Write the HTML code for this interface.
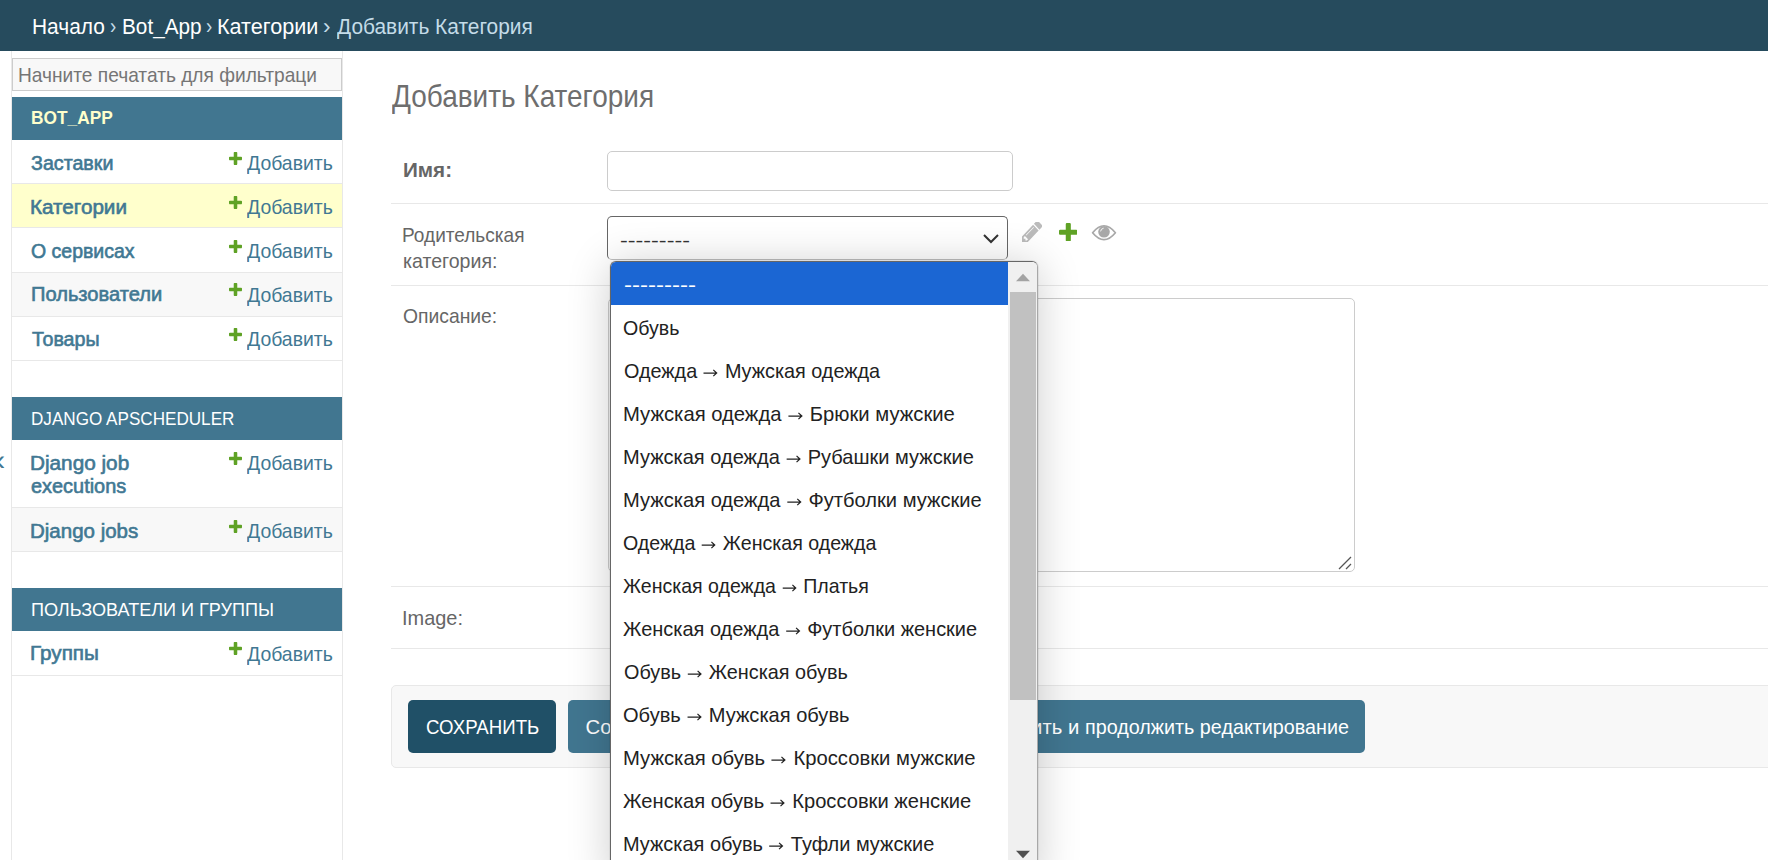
<!DOCTYPE html>
<html><head><meta charset="utf-8"><style>
html,body{margin:0;padding:0;width:1768px;height:860px;overflow:hidden;background:#fff;}
body{position:relative;font-family:"Liberation Sans",sans-serif;}
.t{position:absolute;white-space:nowrap;transform-origin:0 0;}
.r{position:absolute;}
.ar{display:inline-block;width:15px;height:8px;position:relative;top:-1px;margin:0 1px}
.ar svg{position:absolute;left:0;top:0;overflow:visible}

</style></head><body>
<div class="r" style="left:0px;top:0px;width:1768px;height:51px;background:#264b5d"></div>
<div id="t1" class="t" style="left:31.71px;top:11.67px;font-size:22px;line-height:29px;color:#fff;transform:scaleX(0.9495);">Начало</div>
<div id="t2" class="t" style="left:109.58px;top:11.67px;font-size:22px;line-height:29px;color:#c4dce8;transform:scaleX(0.8533);">›</div>
<div id="t3" class="t" style="left:121.70px;top:11.67px;font-size:22px;line-height:29px;color:#fff;transform:scaleX(0.9436);">Bot_App</div>
<div id="t4" class="t" style="left:205.58px;top:11.67px;font-size:22px;line-height:29px;color:#c4dce8;transform:scaleX(0.8533);">›</div>
<div id="t5" class="t" style="left:217.36px;top:11.67px;font-size:22px;line-height:29px;color:#fff;transform:scaleX(0.9811);">Категории</div>
<div id="t6" class="t" style="left:323.36px;top:11.67px;font-size:22px;line-height:29px;color:#c4dce8;transform:scaleX(1.0243);">›</div>
<div id="t7" class="t" style="left:336.71px;top:11.67px;font-size:22px;line-height:29px;color:#c4dce8;transform:scaleX(0.9495);">Добавить Категория</div>
<div class="r" style="left:11px;top:51px;width:1px;height:809px;background:#e8e8e8"></div>
<div class="r" style="left:342px;top:51px;width:1px;height:809px;background:#e8e8e8"></div>
<div class="r" style="left:12px;top:58px;width:330px;height:33px;background:#f8f8f8;border:1px solid #ccc;box-sizing:border-box"></div>
<div id="t8" class="t" style="left:17.96px;top:61.90px;font-size:20.2px;line-height:26px;color:#757575;transform:scaleX(0.9481);">Начните печатать для фильтраци</div>
<div id="t9" class="t" style="left:-11.50px;top:440.10px;font-size:30px;line-height:39px;color:#417893;">«</div>
<div class="r" style="left:12px;top:97px;width:330px;height:43px;background:#417690"></div>
<div id="t10" class="t" style="left:31.16px;top:106.19px;font-size:18.2px;line-height:24px;color:#ffc;font-weight:bold;transform:scaleX(0.9516);">BOT_APP</div>
<div class="r" style="left:12px;top:183px;width:330px;height:1px;background:#e8e8e8"></div>
<div id="t11" class="t" style="left:31.07px;top:150.70px;font-size:19.6px;line-height:25px;color:#417893;font-weight:normal;-webkit-text-stroke:0.6px #417893;transform:scaleX(1.0036);">Заставки</div>
<svg class="r" style="left:228.6px;top:151.7px" width="13" height="13" viewBox="192 192 1408 1408"><path fill="#5fa225" d="M1600 796v192q0 40-28 68t-68 28h-416v416q0 40-28 68t-68 28h-192q-40 0-68-28t-28-68v-416h-416q-40 0-68-28t-28-68v-192q0-40 28-68t68-28h416v-416q0-40 28-68t68-28h192q40 0 68 28t28 68v416h416q40 0 68 28t28 68z"/></svg>
<div id="t12" class="t" style="left:246.65px;top:149.96px;font-size:20.3px;line-height:26px;color:#417893;transform:scaleX(0.9581);">Добавить</div>
<div class="r" style="left:12px;top:184px;width:330px;height:43px;background:#ffc"></div>
<div class="r" style="left:12px;top:227px;width:330px;height:1px;background:#e8e8e8"></div>
<div id="t13" class="t" style="left:30.00px;top:194.70px;font-size:19.6px;line-height:25px;color:#417893;font-weight:normal;-webkit-text-stroke:0.6px #417893;transform:scaleX(1.0547);">Категории</div>
<svg class="r" style="left:228.6px;top:195.7px" width="13" height="13" viewBox="192 192 1408 1408"><path fill="#5fa225" d="M1600 796v192q0 40-28 68t-68 28h-416v416q0 40-28 68t-68 28h-192q-40 0-68-28t-28-68v-416h-416q-40 0-68-28t-28-68v-192q0-40 28-68t68-28h416v-416q0-40 28-68t68-28h192q40 0 68 28t28 68v416h416q40 0 68 28t28 68z"/></svg>
<div id="t14" class="t" style="left:246.65px;top:193.96px;font-size:20.3px;line-height:26px;color:#417893;transform:scaleX(0.9581);">Добавить</div>
<div class="r" style="left:12px;top:272px;width:330px;height:1px;background:#e8e8e8"></div>
<div id="t15" class="t" style="left:31.09px;top:238.70px;font-size:19.6px;line-height:25px;color:#417893;font-weight:normal;-webkit-text-stroke:0.6px #417893;transform:scaleX(0.9949);">О сервисах</div>
<svg class="r" style="left:228.6px;top:239.7px" width="13" height="13" viewBox="192 192 1408 1408"><path fill="#5fa225" d="M1600 796v192q0 40-28 68t-68 28h-416v416q0 40-28 68t-68 28h-192q-40 0-68-28t-28-68v-416h-416q-40 0-68-28t-28-68v-192q0-40 28-68t68-28h416v-416q0-40 28-68t68-28h192q40 0 68 28t28 68v416h416q40 0 68 28t28 68z"/></svg>
<div id="t16" class="t" style="left:246.65px;top:237.96px;font-size:20.3px;line-height:26px;color:#417893;transform:scaleX(0.9581);">Добавить</div>
<div class="r" style="left:12px;top:273px;width:330px;height:43px;background:#f8f8f8"></div>
<div class="r" style="left:12px;top:316px;width:330px;height:1px;background:#e8e8e8"></div>
<div id="t17" class="t" style="left:31.10px;top:282.30px;font-size:19.6px;line-height:25px;color:#417893;font-weight:normal;-webkit-text-stroke:0.6px #417893;transform:scaleX(1.0255);">Пользователи</div>
<svg class="r" style="left:228.6px;top:283.3px" width="13" height="13" viewBox="192 192 1408 1408"><path fill="#5fa225" d="M1600 796v192q0 40-28 68t-68 28h-416v416q0 40-28 68t-68 28h-192q-40 0-68-28t-28-68v-416h-416q-40 0-68-28t-28-68v-192q0-40 28-68t68-28h416v-416q0-40 28-68t68-28h192q40 0 68 28t28 68v416h416q40 0 68 28t28 68z"/></svg>
<div id="t18" class="t" style="left:246.65px;top:281.56px;font-size:20.3px;line-height:26px;color:#417893;transform:scaleX(0.9581);">Добавить</div>
<div class="r" style="left:12px;top:360px;width:330px;height:1px;background:#e8e8e8"></div>
<div id="t19" class="t" style="left:32.09px;top:326.50px;font-size:19.6px;line-height:25px;color:#417893;font-weight:normal;-webkit-text-stroke:0.6px #417893;transform:scaleX(1.0029);">Товары</div>
<svg class="r" style="left:228.6px;top:327.5px" width="13" height="13" viewBox="192 192 1408 1408"><path fill="#5fa225" d="M1600 796v192q0 40-28 68t-68 28h-416v416q0 40-28 68t-68 28h-192q-40 0-68-28t-28-68v-416h-416q-40 0-68-28t-28-68v-192q0-40 28-68t68-28h416v-416q0-40 28-68t68-28h192q40 0 68 28t28 68v416h416q40 0 68 28t28 68z"/></svg>
<div id="t20" class="t" style="left:246.65px;top:325.76px;font-size:20.3px;line-height:26px;color:#417893;transform:scaleX(0.9581);">Добавить</div>
<div class="r" style="left:12px;top:397px;width:330px;height:43px;background:#417690"></div>
<div id="t21" class="t" style="left:31.16px;top:408.09px;font-size:17.9px;line-height:23px;color:#fff;transform:scaleX(0.9560);">DJANGO APSCHEDULER</div>
<div class="r" style="left:12px;top:507px;width:330px;height:1px;background:#e8e8e8"></div>
<div id="t22" class="t" style="left:29.98px;top:450.60px;font-size:19.6px;line-height:25px;color:#417893;font-weight:normal;-webkit-text-stroke:0.6px #417893;transform:scaleX(1.0585);">Django job</div>
<div id="t23" class="t" style="left:31.03px;top:473.70px;font-size:19.6px;line-height:25px;color:#417893;font-weight:normal;-webkit-text-stroke:0.6px #417893;transform:scaleX(1.0167);">executions</div>
<svg class="r" style="left:228.6px;top:451.59999999999997px" width="13" height="13" viewBox="192 192 1408 1408"><path fill="#5fa225" d="M1600 796v192q0 40-28 68t-68 28h-416v416q0 40-28 68t-68 28h-192q-40 0-68-28t-28-68v-416h-416q-40 0-68-28t-28-68v-192q0-40 28-68t68-28h416v-416q0-40 28-68t68-28h192q40 0 68 28t28 68v416h416q40 0 68 28t28 68z"/></svg>
<div id="t24" class="t" style="left:246.65px;top:449.86px;font-size:20.3px;line-height:26px;color:#417893;transform:scaleX(0.9581);">Добавить</div>
<div class="r" style="left:12px;top:508px;width:330px;height:43px;background:#f8f8f8"></div>
<div class="r" style="left:12px;top:551px;width:330px;height:1px;background:#e8e8e8"></div>
<div id="t25" class="t" style="left:30.01px;top:518.50px;font-size:19.6px;line-height:25px;color:#417893;font-weight:normal;-webkit-text-stroke:0.6px #417893;transform:scaleX(1.0458);">Django jobs</div>
<svg class="r" style="left:228.6px;top:519.5px" width="13" height="13" viewBox="192 192 1408 1408"><path fill="#5fa225" d="M1600 796v192q0 40-28 68t-68 28h-416v416q0 40-28 68t-68 28h-192q-40 0-68-28t-28-68v-416h-416q-40 0-68-28t-28-68v-192q0-40 28-68t68-28h416v-416q0-40 28-68t68-28h192q40 0 68 28t28 68v416h416q40 0 68 28t28 68z"/></svg>
<div id="t26" class="t" style="left:246.65px;top:517.76px;font-size:20.3px;line-height:26px;color:#417893;transform:scaleX(0.9581);">Добавить</div>
<div class="r" style="left:12px;top:588px;width:330px;height:43px;background:#417690"></div>
<div id="t27" class="t" style="left:31.08px;top:598.89px;font-size:17.9px;line-height:23px;color:#fff;transform:scaleX(1.0093);">ПОЛЬЗОВАТЕЛИ И ГРУППЫ</div>
<div class="r" style="left:12px;top:675px;width:330px;height:1px;background:#e8e8e8"></div>
<div id="t28" class="t" style="left:30.02px;top:641.40px;font-size:19.6px;line-height:25px;color:#417893;font-weight:normal;-webkit-text-stroke:0.6px #417893;transform:scaleX(1.0559);">Группы</div>
<svg class="r" style="left:228.6px;top:642.4000000000001px" width="13" height="13" viewBox="192 192 1408 1408"><path fill="#5fa225" d="M1600 796v192q0 40-28 68t-68 28h-416v416q0 40-28 68t-68 28h-192q-40 0-68-28t-28-68v-416h-416q-40 0-68-28t-28-68v-192q0-40 28-68t68-28h416v-416q0-40 28-68t68-28h192q40 0 68 28t28 68v416h416q40 0 68 28t28 68z"/></svg>
<div id="t29" class="t" style="left:246.65px;top:640.66px;font-size:20.3px;line-height:26px;color:#417893;transform:scaleX(0.9581);">Добавить</div>
<div id="t30" class="t" style="left:391.77px;top:75.74px;font-size:31.6px;line-height:41px;color:#6e6e6e;transform:scaleX(0.8851);">Добавить Категория</div>
<div class="r" style="left:391px;top:203px;width:1377px;height:1px;background:#e8e8e8"></div>
<div class="r" style="left:391px;top:285px;width:1377px;height:1px;background:#e8e8e8"></div>
<div class="r" style="left:391px;top:586px;width:1377px;height:1px;background:#e8e8e8"></div>
<div class="r" style="left:391px;top:648px;width:1377px;height:1px;background:#e8e8e8"></div>
<div id="t31" class="t" style="left:403.30px;top:156.86px;font-size:20.3px;line-height:26px;color:#666;font-weight:bold;transform:scaleX(1.0182);">Имя:</div>
<div class="r" style="left:607px;top:151px;width:406px;height:40px;border:1px solid #ccc;border-radius:5px;box-sizing:border-box;background:#fff"></div>
<div id="t32" class="t" style="left:401.97px;top:221.76px;font-size:20.3px;line-height:26px;color:#666;transform:scaleX(0.9388);">Родительская</div>
<div id="t33" class="t" style="left:403.01px;top:247.76px;font-size:20.3px;line-height:26px;color:#666;transform:scaleX(0.9641);">категория:</div>
<div class="r" style="left:607px;top:216px;width:401px;height:44px;border:1px solid #666;border-bottom-color:#bdbdbd;border-radius:5px;box-sizing:border-box;background:#fff"></div>
<div id="t34" class="t" style="left:620.06px;top:227.91px;font-size:19px;line-height:25px;color:#333;transform:scaleX(1.2282);">---------</div>
<svg class="r" style="left:982px;top:232px" width="18" height="13" viewBox="0 0 18 13"><path d="M2 3l7 7 7-7" fill="none" stroke="#333" stroke-width="2"/></svg>
<div id="t35" class="t" style="left:402.87px;top:303.36px;font-size:20.3px;line-height:26px;color:#666;transform:scaleX(0.9523);">Описание:</div>
<div class="r" style="left:608px;top:298px;width:747px;height:274px;border:1px solid #ccc;border-radius:5px;box-sizing:border-box;background:#fff"></div>
<svg class="r" style="left:1336px;top:554px" width="18" height="18" viewBox="0 0 18 18"><path d="M3 15L15 3M10 15l5-5" stroke="#555" stroke-width="1.3" fill="none"/></svg>
<div id="t36" class="t" style="left:401.54px;top:604.86px;font-size:20.3px;line-height:26px;color:#666;transform:scaleX(0.9834);">Image:</div>
<svg class="r" style="left:1021.7px;top:221.8px" width="20.2" height="20.3" viewBox="128 224 1515 1440" preserveAspectRatio="none"><path fill="#bbb" d="M491 1536l91-91-235-235-91 91v107h128v128h107zm523-928q0-22-22-22-10 0-17 7l-542 542q-7 7-7 17 0 22 22 22 10 0 17-7l542-542q7-7 7-17zm-54-192l416 416-832 832h-416v-416zm683 96q0 53-37 90l-166 166-416-416 166-165q36-38 90-38 53 0 91 38l235 234q37 39 37 91z"/></svg>
<svg class="r" style="left:1058.6px;top:222.5px" width="18.6" height="18.6" viewBox="192 192 1408 1408"><path fill="#5fa225" d="M1600 796v192q0 40-28 68t-68 28h-416v416q0 40-28 68t-68 28h-192q-40 0-68-28t-28-68v-416h-416q-40 0-68-28t-28-68v-192q0-40 28-68t68-28h416v-416q0-40 28-68t68-28h192q40 0 68 28t28 68v416h416q40 0 68 28t28 68z"/></svg>
<svg class="r" style="left:1090px;top:222px" width="28" height="22" viewBox="0 0 28 22"><path d="M2.6 10.7Q14 -3.2 25.4 10.7Q14 24.6 2.6 10.7z" fill="none" stroke="#a8a8a8" stroke-width="1.7" stroke-linejoin="round"/><circle cx="14" cy="9.8" r="5.8" fill="#a8a8a8"/><path d="M10.6 9.4A3.6 3.6 0 0 1 13.6 6.2" stroke="#fff" stroke-width="0.9" fill="none"/></svg>
<div class="r" style="left:391px;top:685px;width:1399px;height:83px;background:#f8f8f8;border:1px solid #e8e8e8;border-radius:5px;box-sizing:border-box"></div>
<div class="r" style="left:408px;top:700px;width:148px;height:53px;background:#205067;border-radius:5px"></div>
<div id="t37" class="t" style="left:426.25px;top:714.16px;font-size:20.3px;line-height:26px;color:#fff;transform:scaleX(0.9192);">СОХРАНИТЬ</div>
<div class="r" style="left:568px;top:700px;width:797px;height:53px;background:#417690;border-radius:5px"></div>
<div id="t38" class="t" style="left:585.50px;top:714.16px;font-size:20.3px;line-height:26px;color:#fff;">Сохранить и добавить другой объект</div>
<div id="t39" class="t" style="left:961.50px;top:714.16px;font-size:20.3px;line-height:26px;color:#fff;">Сохранить и</div>
<div id="t40" class="t" style="left:1084.74px;top:714.16px;font-size:20.3px;line-height:26px;color:#fff;transform:scaleX(0.9735);">продолжить редактирование</div>
<div class="r" style="left:610px;top:261px;width:428px;height:620px;border:1px solid #666;border-right-color:#a8a8a8;border-radius:6px 6px 0 0;box-sizing:border-box;background:#fff;box-shadow:0 0 0 1px rgba(0,0,0,0.06),0 3px 44px rgba(0,0,0,0.2);overflow:hidden"><div class="r" style="left:0;top:0;width:397px;height:43px;background:#1b66d3;border-top-left-radius:4px"></div><div class="r" style="left:397px;top:0;width:29px;height:620px;background:#f0f0f0"></div><div class="r" style="left:399px;top:30px;width:26px;height:408px;background:#c1c1c1"></div><svg class="r" style="left:404px;top:11px" width="16" height="9" viewBox="0 0 16 9"><path d="M1 8.2L8 .8 15 8.2z" fill="#a3a3a3"/></svg><svg class="r" style="left:404px;top:588px" width="16" height="9" viewBox="0 0 16 9"><path d="M1 .8L8 8.2 15 .8z" fill="#505050"/></svg></div>
<div id="t41" class="t" style="left:623.89px;top:271.80px;font-size:20.2px;line-height:26px;color:#fff;transform:scaleX(1.1885);">---------</div>
<div id="t42" class="t" style="left:623.40px;top:314.80px;font-size:20.2px;line-height:26px;color:#222;transform:scaleX(0.9703);">Обувь</div>
<div id="t43" class="t" style="left:624.01px;top:357.80px;font-size:20.2px;line-height:26px;color:#222;transform:scaleX(0.9815);">Одежда <span class="ar"><svg width="15" height="8" viewBox="0 0 15 8"><path d="M0 4h13.2M10 .9l3.4 3.1L10 7.1" fill="none" stroke="currentColor" stroke-width="1.25"/></svg></span> Мужская одежда</div>
<div id="t44" class="t" style="left:623.46px;top:400.80px;font-size:20.2px;line-height:26px;color:#222;transform:scaleX(1.0025);">Мужская одежда <span class="ar"><svg width="15" height="8" viewBox="0 0 15 8"><path d="M0 4h13.2M10 .9l3.4 3.1L10 7.1" fill="none" stroke="currentColor" stroke-width="1.25"/></svg></span> Брюки мужские</div>
<div id="t45" class="t" style="left:623.06px;top:443.80px;font-size:20.2px;line-height:26px;color:#222;transform:scaleX(0.9917);">Мужская одежда <span class="ar"><svg width="15" height="8" viewBox="0 0 15 8"><path d="M0 4h13.2M10 .9l3.4 3.1L10 7.1" fill="none" stroke="currentColor" stroke-width="1.25"/></svg></span> Рубашки мужские</div>
<div id="t46" class="t" style="left:623.11px;top:486.80px;font-size:20.2px;line-height:26px;color:#222;transform:scaleX(0.9958);">Мужская одежда <span class="ar"><svg width="15" height="8" viewBox="0 0 15 8"><path d="M0 4h13.2M10 .9l3.4 3.1L10 7.1" fill="none" stroke="currentColor" stroke-width="1.25"/></svg></span> Футболки мужские</div>
<div id="t47" class="t" style="left:623.36px;top:529.80px;font-size:20.2px;line-height:26px;color:#222;transform:scaleX(0.9715);">Одежда <span class="ar"><svg width="15" height="8" viewBox="0 0 15 8"><path d="M0 4h13.2M10 .9l3.4 3.1L10 7.1" fill="none" stroke="currentColor" stroke-width="1.25"/></svg></span> Женская одежда</div>
<div id="t48" class="t" style="left:622.94px;top:572.80px;font-size:20.2px;line-height:26px;color:#222;transform:scaleX(0.9681);">Женская одежда <span class="ar"><svg width="15" height="8" viewBox="0 0 15 8"><path d="M0 4h13.2M10 .9l3.4 3.1L10 7.1" fill="none" stroke="currentColor" stroke-width="1.25"/></svg></span> Платья</div>
<div id="t49" class="t" style="left:622.91px;top:615.80px;font-size:20.2px;line-height:26px;color:#222;transform:scaleX(0.9890);">Женская одежда <span class="ar"><svg width="15" height="8" viewBox="0 0 15 8"><path d="M0 4h13.2M10 .9l3.4 3.1L10 7.1" fill="none" stroke="currentColor" stroke-width="1.25"/></svg></span> Футболки женские</div>
<div id="t50" class="t" style="left:624.03px;top:658.80px;font-size:20.2px;line-height:26px;color:#222;transform:scaleX(0.9815);">Обувь <span class="ar"><svg width="15" height="8" viewBox="0 0 15 8"><path d="M0 4h13.2M10 .9l3.4 3.1L10 7.1" fill="none" stroke="currentColor" stroke-width="1.25"/></svg></span> Женская обувь</div>
<div id="t51" class="t" style="left:623.28px;top:701.80px;font-size:20.2px;line-height:26px;color:#222;transform:scaleX(0.9930);">Обувь <span class="ar"><svg width="15" height="8" viewBox="0 0 15 8"><path d="M0 4h13.2M10 .9l3.4 3.1L10 7.1" fill="none" stroke="currentColor" stroke-width="1.25"/></svg></span> Мужская обувь</div>
<div id="t52" class="t" style="left:623.30px;top:744.80px;font-size:20.2px;line-height:26px;color:#222;transform:scaleX(1.0029);">Мужская обувь <span class="ar"><svg width="15" height="8" viewBox="0 0 15 8"><path d="M0 4h13.2M10 .9l3.4 3.1L10 7.1" fill="none" stroke="currentColor" stroke-width="1.25"/></svg></span> Кроссовки мужские</div>
<div id="t53" class="t" style="left:622.91px;top:787.80px;font-size:20.2px;line-height:26px;color:#222;transform:scaleX(0.9968);">Женская обувь <span class="ar"><svg width="15" height="8" viewBox="0 0 15 8"><path d="M0 4h13.2M10 .9l3.4 3.1L10 7.1" fill="none" stroke="currentColor" stroke-width="1.25"/></svg></span> Кроссовки женские</div>
<div id="t54" class="t" style="left:623.13px;top:830.80px;font-size:20.2px;line-height:26px;color:#222;transform:scaleX(0.9878);">Мужская обувь <span class="ar"><svg width="15" height="8" viewBox="0 0 15 8"><path d="M0 4h13.2M10 .9l3.4 3.1L10 7.1" fill="none" stroke="currentColor" stroke-width="1.25"/></svg></span> Туфли мужские</div>
</body></html>
